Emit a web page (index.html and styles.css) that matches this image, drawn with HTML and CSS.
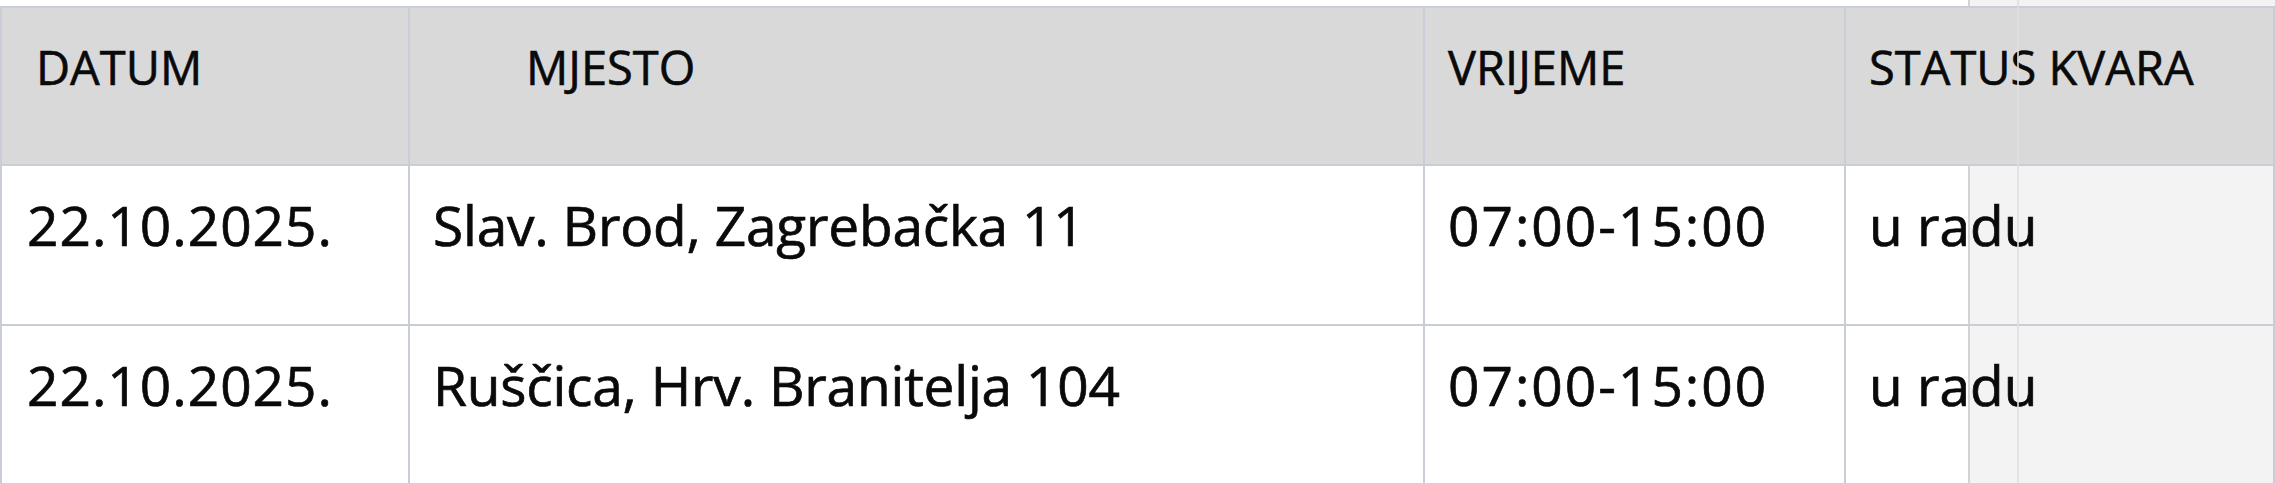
FILE: index.html
```html
<!DOCTYPE html>
<html lang="hr">
<head>
<meta charset="utf-8">
<title>Kvarovi</title>
<link rel="stylesheet" href="styles.css">
</head>
<body>
<div class="page">
  <div class="side-panel"></div>
  <div class="side-line"></div>
  <table class="outages">
    <thead>
      <tr>
        <th class="col-date th-date">DATUM</th>
        <th class="col-place th-place">MJESTO</th>
        <th class="col-time">VRIJEME</th>
        <th class="col-status">STATUS KVARA</th>
      </tr>
    </thead>
    <tbody>
      <tr>
        <td class="col-date">22.10.2025.</td>
        <td class="col-place">Slav. Brod, Zagrebačka 11</td>
        <td class="col-time">07:00-15:00</td>
        <td class="col-status">u radu</td>
      </tr>
      <tr>
        <td class="col-date">22.10.2025.</td>
        <td class="col-place">Ruščica, Hrv. Branitelja 104</td>
        <td class="col-time">07:00-15:00</td>
        <td class="col-status">u radu</td>
      </tr>
    </tbody>
  </table>
</div>
</body>
</html>
```

FILE: styles.css
```css
html, body {
  margin: 0;
  padding: 0;
  background: #ffffff;
}

body {
  font-family: "Open Sans", "Liberation Sans", sans-serif;
  color: #0a0a0a;
  overflow: hidden;
}

.page {
  position: relative;
  width: 2275px;
  height: 483px;
  padding-top: 6px;
  box-sizing: border-box;
}

.side-panel {
  position: absolute;
  left: 1968px;
  top: 0;
  right: 0;
  bottom: 0;
  background: #f3f3f3;
  border-left: 2px solid #d3d3d3;
  z-index: 0;
}

.side-line {
  position: absolute;
  left: 2017px;
  top: 0;
  bottom: 0;
  width: 2px;
  background: #dedfe2;
  opacity: 0.8;
  z-index: 2;
}

.outages {
  position: relative;
  z-index: 1;
  border-collapse: separate;
  border-spacing: 0;
  table-layout: fixed;
  width: 2275px;
  border-right: 2px solid #c9ced6;
}

.outages th,
.outages td {
  border-top: 2px solid #c9ced6;
  border-left: 2px solid #c9ced6;
  text-align: left;
  vertical-align: top;
  white-space: nowrap;
  padding-left: 23px;
  padding-right: 0;
  font-weight: 400;
}

.outages th {
  background: #d9d9d9;
  font-size: 47px;
  line-height: 64px;
  padding-top: 27px;
  padding-bottom: 65px;
  letter-spacing: 0;
  -webkit-text-stroke: 0.6px #0a0a0a;
}

.outages td {
  background: transparent;
  font-size: 55px;
  line-height: 76px;
  padding-top: 21px;
  padding-bottom: 61px;
  -webkit-text-stroke: 0.7px #0a0a0a;
}

.col-date { width: 408px; box-sizing: border-box; }
.col-place { width: 1015px; box-sizing: border-box; }
.col-time { width: 421px; box-sizing: border-box; }
.col-status { width: 429px; box-sizing: border-box; }

.outages td.col-date { padding-left: 25px; letter-spacing: 1px; }
.outages td.col-place { letter-spacing: -0.2px; }
.outages td.col-time { letter-spacing: 2px; }
.outages th.th-date { padding-left: 34px; }
.outages th.th-place { padding-left: 116px; }
```
